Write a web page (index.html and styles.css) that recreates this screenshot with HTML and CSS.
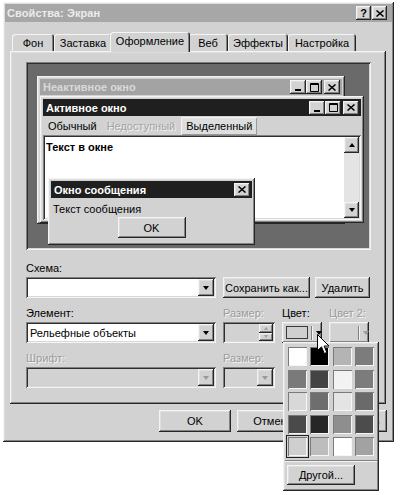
FILE: index.html
```html
<!DOCTYPE html>
<html lang="ru">
<head>
<meta charset="utf-8">
<title>Свойства: Экран</title>
<link rel="stylesheet" href="styles.css">
</head>
<body>
<div class="dialog out">
  <div class="titlebar">
    <span class="title">Свойства: Экран</span>
    <div class="cap-btns">
      <span class="cap-btn out help">?</span>
      <span class="cap-btn out"><svg width="8" height="7" viewBox="0 0 8 7"><path d="M0.5 0.5 L7.5 6.5 M7.5 0.5 L0.5 6.5" stroke="#000" stroke-width="1.5"/></svg></span>
    </div>
  </div>

  <div class="tabs">
    <span class="tab t-fon">Фон</span>
    <span class="tab t-zast">Заставка</span>
    <span class="tab t-ofor active">Оформление</span>
    <span class="tab t-web">Веб</span>
    <span class="tab t-eff">Эффекты</span>
    <span class="tab t-nast">Настройка</span>
  </div>

  <div class="panel out">
    <div class="preview in">
      <div class="win out w-inactive">
        <div class="wtitle inactive-title">
          <span>Неактивное окно</span>
          <div class="wbtns">
            <span class="cap-btn out"><svg width="8" height="8" viewBox="0 0 8 8"><rect x="1" y="6" width="6" height="2"/></svg></span>
            <span class="cap-btn out"><svg width="9" height="9" viewBox="0 0 9 9"><path d="M0.5 0.5h8v8h-8z M0.5 1.5h8" fill="none" stroke="#000"/></svg></span>
            <span class="cap-btn out gap"><svg width="8" height="7" viewBox="0 0 8 7"><path d="M0.5 0.5 L7.5 6.5 M7.5 0.5 L0.5 6.5" stroke="#000" stroke-width="1.5"/></svg></span>
          </div>
        </div>
      </div>

      <div class="win out w-active">
        <div class="wtitle active-title">
          <span>Активное окно</span>
          <div class="wbtns">
            <span class="cap-btn out"><svg width="8" height="8" viewBox="0 0 8 8"><rect x="1" y="6" width="6" height="2"/></svg></span>
            <span class="cap-btn out"><svg width="9" height="9" viewBox="0 0 9 9"><path d="M0.5 0.5h8v8h-8z M0.5 1.5h8" fill="none" stroke="#000"/></svg></span>
            <span class="cap-btn out gap"><svg width="8" height="7" viewBox="0 0 8 7"><path d="M0.5 0.5 L7.5 6.5 M7.5 0.5 L0.5 6.5" stroke="#000" stroke-width="1.5"/></svg></span>
          </div>
        </div>
        <div class="menu">
          <span class="mi">Обычный</span>
          <span class="mi dis">Недоступный</span>
          <span class="mi sel">Выделенный</span>
        </div>
        <div class="client in">
          <div class="ctext">Текст в окне</div>
          <div class="vscroll">
            <span class="sbtn out"><i class="tri-up"></i></span>
            <span class="track"></span>
            <span class="sbtn out"><i class="tri-down"></i></span>
          </div>
        </div>
      </div>

      <div class="win out w-msg">
        <div class="wtitle active-title">
          <span>Окно сообщения</span>
          <div class="wbtns">
            <span class="cap-btn out"><svg width="8" height="7" viewBox="0 0 8 7"><path d="M0.5 0.5 L7.5 6.5 M7.5 0.5 L0.5 6.5" stroke="#000" stroke-width="1.5"/></svg></span>
          </div>
        </div>
        <div class="mbody">
          <div class="mtext">Текст сообщения</div>
          <span class="btn out mok">OK</span>
        </div>
      </div>
    </div>

    <div class="form">
      <div class="lbl first">Схема:</div>
      <div class="scheme-row">
        <div class="combo in"><span class="ctxt"></span><span class="dd out"><i class="tri-down"></i></span></div>
        <span class="btn out b-save">Сохранить как...</span>
        <span class="btn out b-del">Удалить</span>
      </div>
      <div class="props">
        <div class="lbl">Элемент:</div>
        <div class="lbl dis">Размер:</div>
        <div class="lbl">Цвет:</div>
        <div class="lbl dis">Цвет 2:</div>

        <div class="combo in ctl"><span class="ctxt">Рельефные объекты</span><span class="dd out"><i class="tri-down"></i></span></div>
        <div class="spin in ctl"><span class="spin-btns"><span class="spb out"><i class="tri-up small"></i></span><span class="spb out"><i class="tri-down small"></i></span></span></div>
        <div class="colorbtn out ctl"><span class="cswatch"></span><span class="csep"></span><i class="tri-down"></i></div>
        <div class="colorbtn out ctl"><span class="cswatch empty"></span><span class="csep"></span><i class="tri-down gray"></i></div>

        <div class="lbl dis lbl2">Шрифт:</div>
        <div class="lbl dis lbl2">Размер:</div>
        <div class="lbl lbl2"></div>
        <div class="lbl lbl2"></div>

        <div class="combo in ctl disabled"><span class="ctxt"></span><span class="dd out"><i class="tri-down gray"></i></span></div>
        <div class="combo in ctl disabled"><span class="ctxt"></span><span class="dd out"><i class="tri-down gray"></i></span></div>
      </div>
    </div>
  </div>

  <div class="actions">
    <span class="btn out act">OK</span>
    <span class="btn out act">Отмена</span>
    <span class="btn out act">Применить</span>
  </div>
</div>

<div class="popup out">
  <div class="swatches">
    <span class="sw s1"></span><span class="sw s2"></span><span class="sw s3"></span><span class="sw s4"></span>
    <span class="sw s5"></span><span class="sw s6"></span><span class="sw s7"></span><span class="sw s8"></span>
    <span class="sw s9"></span><span class="sw s10"></span><span class="sw s11"></span><span class="sw s12"></span>
    <span class="sw s13"></span><span class="sw s14"></span><span class="sw s15"></span><span class="sw s16"></span>
    <span class="sw s17 chosen"></span><span class="sw s18"></span><span class="sw s19"></span><span class="sw s20"></span>
  </div>
  <div class="psep"></div>
  <span class="btn out other">Другой...</span>
</div>

<svg class="cursor" width="13" height="21" viewBox="0 0 13 21"><path d="M0.5 0.5 L0.5 16.5 L4.5 12.8 L7.3 19.5 L9.8 18.4 L7.1 12 L12 12 Z" fill="#fff" stroke="#000" stroke-width="1"/></svg>
</body>
</html>
```

FILE: styles.css
```css
* { box-sizing: border-box; }
html, body { margin: 0; padding: 0; background: #fff; }
body {
  font-family: "Liberation Sans", Arial, sans-serif;
  font-size: 11px;
  color: #000;
  width: 400px;
  height: 495px;
  position: relative;
  overflow: hidden;
}

.out {
  box-shadow: inset -1px -1px #262626, inset 1px 1px #f4f4f4, inset -2px -2px #838383, inset 2px 2px #dedede;
}
.in {
  box-shadow: inset 1px 1px #808080, inset -1px -1px #f6f6f6, inset 2px 2px #2e2e2e, inset -2px -2px #d8d8d8;
}

.dialog {
  margin: 2px 0 0 3px;
  width: 391px;
  height: 440px;
  padding: 2px;
  background: #d2d2d2;
}

.titlebar {
  height: 18px;
  background: #a7a7a7;
  display: flex;
  align-items: center;
  justify-content: space-between;
  padding: 0 5px 0 2px;
}
.title { color: #ececec; font-weight: bold; letter-spacing: 0.1px; }
.cap-btns { display: flex; gap: 1px; }
.cap-btn {
  width: 15px;
  height: 14px;
  background: #d2d2d2;
  display: flex;
  align-items: center;
  justify-content: center;
}
.cap-btn svg { display: block; }
.help { font-weight: bold; font-size: 11px; line-height: 14px; }

.tabs {
  display: flex;
  align-items: flex-end;
  height: 19px;
  margin: 10px 0 0 7px;
  position: relative;
  z-index: 2;
}
.tab {
  height: 17px;
  line-height: 16px;
  padding-top: 1px;
  text-align: center;
  border-radius: 3px 3px 0 0;
  background: #d2d2d2;
  box-shadow: inset 1px 1px #f4f4f4, inset -1px 0 #262626, inset -2px 0 #838383;
}
.t-fon { width: 42px; }
.t-zast { width: 58px; }
.t-ofor { width: 76px; }
.t-web { width: 40px; }
.t-eff { width: 60px; }
.t-nast { width: 68px; }
.tab.active {
  width: 80px;
  height: 20px;
  margin: 0 -2px -1px;
  line-height: 17px;
  position: relative;
  z-index: 3;
}

.panel {
  margin-left: 5px;
  width: 376px;
  height: 353px;
  padding: 11px 0 0 16px;
  position: relative;
  z-index: 1;
}

.preview {
  width: 345px;
  height: 188px;
  background: #6a6a6a;
  position: relative;
}

.win {
  position: absolute;
  background: #d2d2d2;
  padding: 3px;
}
.w-inactive { left: 11px; top: 14px; width: 308px; height: 148px; }
.w-active { left: 14px; top: 34px; width: 324px; height: 127px; display: flex; flex-direction: column; }
.w-msg { left: 22px; top: 116px; width: 207px; height: 67px; }

.wtitle {
  display: flex;
  align-items: center;
  justify-content: space-between;
  font-weight: bold;
  padding: 0 2px 0 3px;
}
.inactive-title { height: 16px; background: #a3a3a3; color: #d9d9d9; }
.active-title { height: 17px; background: #1f1f1f; color: #fff; }
.wbtns { display: flex; }
.wbtns .cap-btn { width: 16px; height: 14px; }
.wbtns .gap { margin-left: 2px; }

.menu {
  display: flex;
  align-items: center;
  height: 19px;
  padding-left: 0;
}
.mi { padding: 0 5px; line-height: 16px; }
.mi.dis { color: #a3a3a3; text-shadow: 1px 1px #f4f4f4; padding-right: 4px; }
.mi.sel {
  margin-left: 2px;
  padding: 0 5px;
  background: #dedede;
  box-shadow: inset 1px 1px #f4f4f4, inset -1px -1px #9a9a9a;
  line-height: 18px;
}

.client {
  flex: 1;
  background: #fff;
  display: flex;
  justify-content: space-between;
  padding: 2px;
}
.ctext { font-weight: bold; padding: 4px 0 0 1px; }
.vscroll {
  width: 15px;
  display: flex;
  flex-direction: column;
  background: #e4e4e4;
}
.sbtn {
  height: 16px;
  background: #d2d2d2;
  display: flex;
  align-items: center;
  justify-content: center;
}
.track { flex: 1; }

.mbody {
  display: flex;
  flex-direction: column;
  align-items: center;
}
.mtext { align-self: flex-start; padding: 4px 0 0 2px; line-height: 14px; }
.mok { width: 68px; height: 21px; margin-top: 1px; }

.btn {
  display: flex;
  align-items: center;
  justify-content: center;
  background: #d2d2d2;
  white-space: nowrap;
}

.tri-down, .tri-up {
  display: block;
  width: 0;
  height: 0;
  border-left: 3.5px solid transparent;
  border-right: 3.5px solid transparent;
}
.tri-down { border-top: 4px solid #000; }
.tri-up { border-bottom: 4px solid #000; }
.tri-down.gray { border-top-color: #9a9a9a; }
.tri-down.small, .tri-up.small { border-left-width: 2.5px; border-right-width: 2.5px; }
.tri-down.small { border-top: 3px solid #a0a0a0; }
.tri-up.small { border-bottom: 3px solid #a0a0a0; }

.form { width: 345px; }
.lbl { height: 14px; line-height: 14px; }
.lbl.first { margin-top: 11px; }
.lbl.dis { color: #9c9c9c; text-shadow: 1px 1px #f4f4f4; }
.lbl2 { margin-top: 8px; }

.scheme-row {
  display: flex;
  align-items: center;
  margin-top: 2px;
  gap: 7px;
}
.scheme-row .combo { width: 190px; }
.b-save { width: 87px; height: 21px; }
.b-del { width: 55px; height: 21px; margin-left: -2px; }

.combo {
  height: 21px;
  background: #fff;
  display: flex;
  align-items: center;
  justify-content: space-between;
  padding: 2px;
}
.combo.disabled { background: #d2d2d2; }
.ctxt { padding-left: 2px; white-space: nowrap; }
.dd {
  width: 16px;
  height: 17px;
  background: #d2d2d2;
  display: flex;
  align-items: center;
  justify-content: center;
}

.props {
  display: grid;
  grid-template-columns: 190px 52px 40px 40px;
  column-gap: 7px;
  margin-top: 8px;
}
.ctl { margin-top: 2px; height: 21px; }

.spin {
  background: #d2d2d2;
  display: flex;
  justify-content: flex-end;
  padding: 2px;
}
.spin-btns { display: flex; flex-direction: column; width: 14px; }
.spb {
  flex: 1;
  background: #d2d2d2;
  display: flex;
  align-items: center;
  justify-content: center;
}

.colorbtn {
  display: flex;
  align-items: center;
  padding: 0 0 0 4px;
  background: #d2d2d2;
}
.cswatch {
  width: 23px;
  height: 13px;
  border: 1px solid #3a3a3a;
  background: #cfcfcf;
}
.cswatch.empty { border-color: transparent; background: transparent; }
.csep {
  width: 2px;
  height: 14px;
  margin: 0 3px 0 3px;
  border-left: 1px solid #808080;
  border-right: 1px solid #f4f4f4;
}

.actions {
  display: flex;
  justify-content: flex-end;
  gap: 6px;
  margin-top: 6px;
  padding-right: 5px;
}
.act { width: 72px; height: 22px; }

.popup {
  position: absolute;
  left: 283px;
  top: 342px;
  width: 96px;
  height: 149px;
  background: #d2d2d2;
  padding: 5px 4px 0 5px;
  z-index: 10;
}
.swatches {
  display: grid;
  grid-template-columns: repeat(4, 19px);
  grid-auto-rows: 19px;
  column-gap: 3.4px;
  row-gap: 3.5px;
}
.sw { box-shadow: inset 1px 1px #7a7a7a, inset -1px -1px #f6f6f6; }
.sw.chosen { outline: 1px solid #222; outline-offset: 1px; }
.s1 { background: #ffffff; }
.s2 { background: #000000; }
.s3 { background: #b4b4b4; }
.s4 { background: #7c7c7c; }
.s5 { background: #7a7a7a; }
.s6 { background: #444444; }
.s7 { background: #f2f2f2; }
.s8 { background: #7c7c7c; }
.s9 { background: #d8d8d8; }
.s10 { background: #6e6e6e; }
.s11 { background: #e4e4e4; }
.s12 { background: #6a6a6a; }
.s13 { background: #4a4a4a; }
.s14 { background: #262626; }
.s15 { background: #8e8e8e; }
.s16 { background: #4c4c4c; }
.s17 { background: #cfcfcf; }
.s18 { background: #bdbdbd; }
.s19 { background: #ffffff; }
.s20 { background: #a2a2a2; }
.psep {
  height: 2px;
  margin: 4px -2px 0 -3px;
  border-top: 1px solid #808080;
  border-bottom: 1px solid #f4f4f4;
}
.other { width: 68px; height: 20px; margin: 3px 0 0 -1px; }

.cursor {
  position: absolute;
  left: 317px;
  top: 334px;
  z-index: 20;
}
```
